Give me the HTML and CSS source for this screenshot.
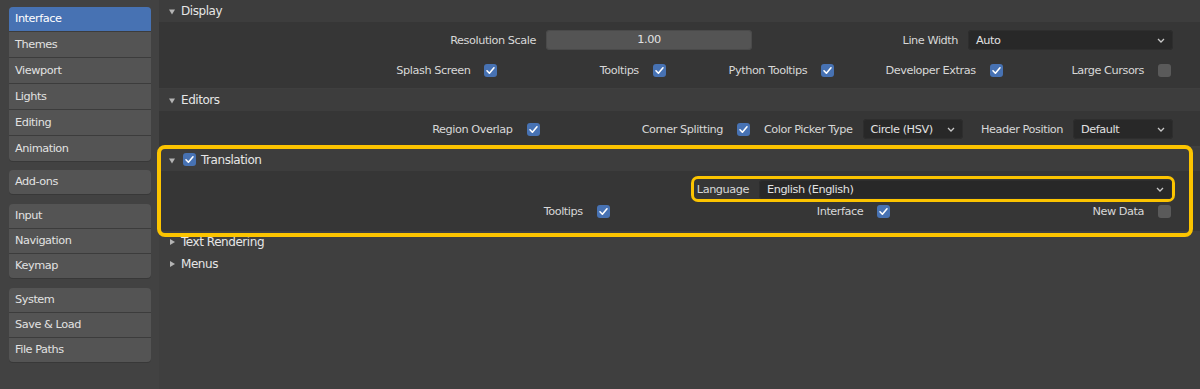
FILE: index.html
```html
<!DOCTYPE html>
<html lang="en">
<head>
  <meta charset="UTF-8">
  <meta name="viewport" content="width=device-width, initial-scale=1.0">
  <title>Preferences - Interface</title>
  <link rel="stylesheet" href="styles.css">
</head>
<body>
  <div class="app">
    <nav class="sidebar">
      <div class="nav-group">
        <div class="nav-item active">Interface</div>
        <div class="nav-item">Themes</div>
        <div class="nav-item">Viewport</div>
        <div class="nav-item">Lights</div>
        <div class="nav-item">Editing</div>
        <div class="nav-item">Animation</div>
      </div>
      <div class="nav-group compact">
        <div class="nav-item">Add-ons</div>
      </div>
      <div class="nav-group compact">
        <div class="nav-item">Input</div>
        <div class="nav-item">Navigation</div>
        <div class="nav-item">Keymap</div>
      </div>
      <div class="nav-group compact">
        <div class="nav-item">System</div>
        <div class="nav-item">Save &amp; Load</div>
        <div class="nav-item">File Paths</div>
      </div>
    </nav>

    <main class="prefs">
      <section class="panel">
        <div class="panel-header">
          <svg class="arrow" width="8" height="8" viewBox="0 0 8 8"><polygon points="1,2.5 7,2.5 4,7.5" /></svg>
          <span>Display</span>
        </div>
        <div class="panel-body display-body">
          <div class="row cols-2">
            <div class="cell"><span class="label">Resolution Scale</span><span class="slider">1.00</span></div>
            <div class="cell"><span class="label">Line Width</span><span class="select w205">Auto<svg class="chev" width="8" height="5" viewBox="0 0 8 5"><path d="M1 1 L4 4 L7 1" /></svg></span></div>
          </div>
          <div class="row cols-5">
            <div class="cell"><span class="label">Splash Screen</span><span class="check on"><svg width="13" height="13" viewBox="0 0 13 13"><path d="M3 6.8 L5.4 9.2 L10 3.8" /></svg></span></div>
            <div class="cell"><span class="label">Tooltips</span><span class="check on"><svg width="13" height="13" viewBox="0 0 13 13"><path d="M3 6.8 L5.4 9.2 L10 3.8" /></svg></span></div>
            <div class="cell"><span class="label">Python Tooltips</span><span class="check on"><svg width="13" height="13" viewBox="0 0 13 13"><path d="M3 6.8 L5.4 9.2 L10 3.8" /></svg></span></div>
            <div class="cell"><span class="label">Developer Extras</span><span class="check on"><svg width="13" height="13" viewBox="0 0 13 13"><path d="M3 6.8 L5.4 9.2 L10 3.8" /></svg></span></div>
            <div class="cell"><span class="label">Large Cursors</span><span class="check"></span></div>
          </div>
        </div>
      </section>

      <section class="panel">
        <div class="panel-header">
          <svg class="arrow" width="8" height="8" viewBox="0 0 8 8"><polygon points="1,2.5 7,2.5 4,7.5" /></svg>
          <span>Editors</span>
        </div>
        <div class="panel-body editors-body">
          <div class="row cols-4">
            <div class="cell"><span class="label">Region Overlap</span><span class="check on"><svg width="13" height="13" viewBox="0 0 13 13"><path d="M3 6.8 L5.4 9.2 L10 3.8" /></svg></span></div>
            <div class="cell"><span class="label">Corner Splitting</span><span class="check on"><svg width="13" height="13" viewBox="0 0 13 13"><path d="M3 6.8 L5.4 9.2 L10 3.8" /></svg></span></div>
            <div class="cell"><span class="label">Color Picker Type</span><span class="select w100">Circle (HSV)<svg class="chev" width="8" height="5" viewBox="0 0 8 5"><path d="M1 1 L4 4 L7 1" /></svg></span></div>
            <div class="cell"><span class="label">Header Position</span><span class="select w100">Default<svg class="chev" width="8" height="5" viewBox="0 0 8 5"><path d="M1 1 L4 4 L7 1" /></svg></span></div>
          </div>
        </div>
      </section>

      <section class="panel translation">
        <div class="panel-header">
          <svg class="arrow" width="8" height="8" viewBox="0 0 8 8"><polygon points="1,2.5 7,2.5 4,7.5" /></svg>
          <span class="check on head-check"><svg width="13" height="13" viewBox="0 0 13 13"><path d="M3 6.8 L5.4 9.2 L10 3.8" /></svg></span>
          <span>Translation</span>
        </div>
        <div class="panel-body translation-body">
          <div class="row lang-row">
            <div class="lang-field">
              <span class="label">Language</span>
              <span class="select w413">English (English)<svg class="chev" width="8" height="5" viewBox="0 0 8 5"><path d="M1 1 L4 4 L7 1" /></svg></span>
            </div>
          </div>
          <div class="row cols-3">
            <div class="cell"><span class="label">Tooltips</span><span class="check on"><svg width="13" height="13" viewBox="0 0 13 13"><path d="M3 6.8 L5.4 9.2 L10 3.8" /></svg></span></div>
            <div class="cell"><span class="label">Interface</span><span class="check on"><svg width="13" height="13" viewBox="0 0 13 13"><path d="M3 6.8 L5.4 9.2 L10 3.8" /></svg></span></div>
            <div class="cell"><span class="label">New Data</span><span class="check"></span></div>
          </div>
        </div>
        <div class="highlight"></div>
      </section>

      <section class="panel closed">
        <div class="panel-header">
          <svg class="arrow" width="8" height="8" viewBox="0 0 8 8"><polygon points="2,1 7,4 2,7" /></svg>
          <span>Text Rendering</span>
        </div>
      </section>

      <section class="panel closed">
        <div class="panel-header">
          <svg class="arrow" width="8" height="8" viewBox="0 0 8 8"><polygon points="2,1 7,4 2,7" /></svg>
          <span>Menus</span>
        </div>
      </section>
    </main>
  </div>
</body>
</html>
```

FILE: styles.css
```css
body {
  margin: 0;
  padding: 0;
  background-color: #3f3f3f;
  color: #dcdcdc;
  font-family: 'DejaVu Sans', 'Liberation Sans', sans-serif;
  font-size: 11.3px;
  letter-spacing: -0.45px;
}
.app {
  display: flex;
  height: 389px;
  overflow: hidden;
}

/* navigation */
.sidebar {
  width: 159px;
  flex-shrink: 0;
  box-sizing: border-box;
  padding: 7px 8px 0 9px;
  background-color: #424242;
  display: flex;
  flex-direction: column;
  gap: 9px;
}
.nav-group {
  border-radius: 4px;
  overflow: hidden;
  background-color: #545454;
  box-shadow: 0 1px 0 #383838;
}
.nav-group:nth-child(n+3) {
  margin-top: 1px;
}
.nav-item {
  height: 25px;
  line-height: 25px;
  padding-left: 6px;
  color: #e2e2e2;
  border-top: 1px solid #3c3c3c;
}
.nav-item:first-child,
.nav-group.compact .nav-item {
  height: 24px;
  line-height: 24px;
}
.nav-item:first-child {
  border-top: none;
}
.nav-item.active {
  background-color: #4772b3;
  color: #fff;
}

/* panels */
.prefs {
  flex: 1;
  background-color: #3f3f3f;
}
.panel {
  position: relative;
  margin-bottom: 1px;
}
.panel.closed {
  margin-bottom: 0;
}
.panel.translation {
  margin-top: 2px;
  margin-bottom: 0;
}
.panel-header {
  height: 22px;
  display: flex;
  align-items: center;
  padding-left: 9px;
  background-color: #3d3d3d;
  color: #e6e6e6;
  font-size: 12px;
}
.panel.translation .panel-header {
  height: 23px;
}
.panel.closed .panel-header {
  background-color: #3f3f3f;
}
.arrow {
  fill: #b4b4b4;
  margin-right: 5px;
}
.head-check {
  margin: 0 5px 0 2px;
}
.panel-body {
  background-color: #363636;
  padding: 8px 27px 8px 0;
}
.display-body .row + .row {
  margin-top: 10px;
}
.editors-body {
  padding-bottom: 7px;
}
.translation-body {
  padding-bottom: 10px;
}
.translation-body .row + .row {
  margin-top: 2px;
}

.row {
  width: 842px;
  margin-left: auto;
  height: 20px;
  display: grid;
}
.cols-2 { grid-template-columns: repeat(2, 1fr); }
.cols-3 { grid-template-columns: repeat(3, 1fr); }
.cols-4 { grid-template-columns: repeat(4, 1fr); }
.cols-5 { grid-template-columns: repeat(5, 1fr); }

.cell {
  display: flex;
  align-items: center;
  justify-content: flex-end;
}
.label {
  color: #d8d8d8;
  margin-right: 10px;
  white-space: nowrap;
}
.cell .check {
  margin-left: 4px;
  margin-right: 2px;
}

.check {
  width: 13px;
  height: 13px;
  border-radius: 3px;
  background-color: #5a5a5a;
  display: inline-flex;
  flex-shrink: 0;
}
.check.on {
  background-color: #4772b3;
}
.check svg path {
  fill: none;
  stroke: #fff;
  stroke-width: 1.6;
  stroke-linecap: round;
  stroke-linejoin: round;
}

.slider {
  width: 206px;
  height: 20px;
  line-height: 20px;
  box-sizing: border-box;
  text-align: center;
  background-color: #545454;
  border-radius: 4px;
  box-shadow: inset 0 0 0 1px #4a4a4a;
  color: #e2e2e2;
}
.select {
  height: 20px;
  box-sizing: border-box;
  padding: 0 8px;
  background-color: #282828;
  border-radius: 4px;
  box-shadow: inset 0 0 0 1px #2e2e2e;
  color: #e2e2e2;
  display: flex;
  align-items: center;
  justify-content: space-between;
  white-space: nowrap;
}
.w205 { width: 205px; }
.w100 { width: 100px; }
.w413 { width: 413px; }
.chev path {
  fill: none;
  stroke: #c8c8c8;
  stroke-width: 1.3;
}

.lang-row {
  display: flex;
  justify-content: flex-end;
  height: 20px;
}
.lang-field {
  display: flex;
  align-items: center;
  padding-left: 3px;
  margin-right: 1px;
  border-radius: 4px;
  box-shadow: 0 0 0 3px #fcc400;
}
.lang-field .label {
  margin-right: 10px;
}
.lang-field .select {
  height: 19px;
}

/* annotation frame over the translation panel */
.highlight {
  position: absolute;
  left: -2px;
  top: -3px;
  right: 7px;
  bottom: -6px;
  border: 4px solid #fcc400;
  border-radius: 8px;
  pointer-events: none;
  z-index: 2;
}
```
